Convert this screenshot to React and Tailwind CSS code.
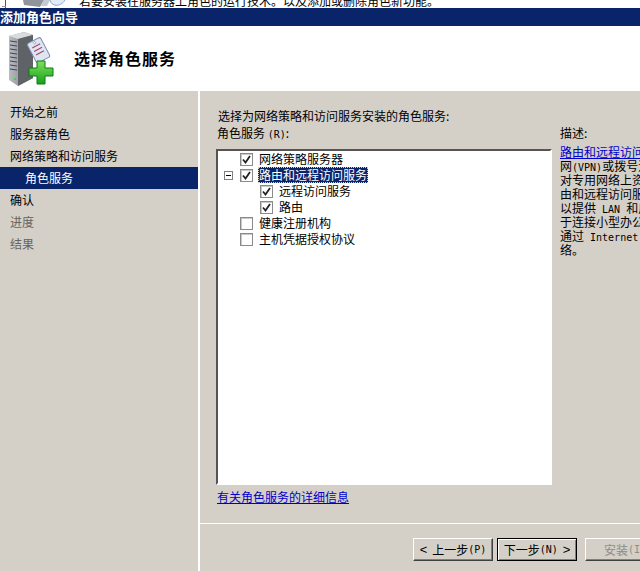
const FONT = "font-['Noto_Sans_CJK_SC','Liberation_Sans',sans-serif]";

function Latin({ children }) {
  return <span className="font-['DejaVu_Sans_Mono',monospace] text-[10px] leading-none whitespace-pre">{children}</span>;
}

function CroppedIcon() {
  return (
    <svg width="79" height="8" viewBox="0 0 79 8" className="shrink-0">
      <rect x="5" y="0" width="1" height="8" fill="#555" />
      <rect x="2" y="6" width="4" height="1" fill="#999" />
      <path d="M23 0 H44 L40 7 L24 5 Z" fill="#8f959b" />
      <path d="M44 0 H50 L47 6 H41 Z" fill="#c4cad0" />
      <path d="M50 0 C51 6 60 8 65 0" fill="#e3ebf4" stroke="#8fa6c2" strokeWidth="1" />
    </svg>
  );
}

function WizardIcon() {
  return (
    <svg width="50" height="54" viewBox="0 0 50 54" className="shrink-0">
      <defs>
        <linearGradient id="srv" x1="0" x2="1" y1="0" y2="0">
          <stop offset="0" stopColor="#b9bcc2" />
          <stop offset="1" stopColor="#6f7379" />
        </linearGradient>
        <linearGradient id="plus" x1="0" x2="0" y1="0" y2="1">
          <stop offset="0" stopColor="#7fe05a" />
          <stop offset="1" stopColor="#18a01c" />
        </linearGradient>
      </defs>
      <path d="M0 4 L15 0 L24 3 L24 46 L9 54 L0 48 Z" fill="url(#srv)" />
      <path d="M0 4 L15 0 L24 3 L9 7 Z" fill="#d9dbde" />
      <path d="M9 7 L24 3 L24 46 L9 54 Z" fill="#5f6368" />
      <path d="M1 9 L8 10 M1 13 L8 14 M1 17 L8 18 M1 21 L8 22 M1 25 L8 26 M1 29 L8 30 M1 33 L8 34 M1 37 L8 38" stroke="#45484d" strokeWidth="1.2" />
      <rect x="5" y="46" width="2" height="2" fill="#46d040" />
      <g transform="rotate(-28 30 18)">
        <rect x="22" y="7" width="15" height="22" rx="2" fill="#dfe6f2" stroke="#7d8fb0" />
        <path d="M25 13 H34 M25 17 H34 M25 21 H34" stroke="#a04a70" strokeWidth="1.2" />
        <circle cx="29.5" cy="9.5" r="1.2" fill="#fff" stroke="#7d8fb0" strokeWidth="0.6" />
      </g>
      <path d="M28 29 H36 V36 H44 V44 H36 V52 H28 V44 H20 V36 H28 Z" fill="url(#plus)" stroke="#0e7a14" strokeWidth="1" />
    </svg>
  );
}

function Check({ checked }) {
  return (
    <span className="flex h-[13px] w-[13px] shrink-0 items-center justify-center border border-[#8a8a8a] bg-white shadow-[inset_1px_1px_0_#c9c9c9]">
      {checked && (
        <svg width="9" height="9" viewBox="0 0 9 9">
          <path d="M1 4.5 L3.5 7.5 L8 1" fill="none" stroke="#222" strokeWidth="1.8" />
        </svg>
      )}
    </span>
  );
}

function TreeRow({ label, checked, nested, expander, selected }) {
  return (
    <div className={`flex h-4 items-center ${nested ? "pl-[42px]" : "pl-[22px]"}`}>
      {expander && (
        <span className="-ml-[16px] mr-[7px] flex h-[9px] w-[9px] items-center justify-center border border-[#808080] bg-white">
          <span className="h-px w-[5px] bg-black" />
        </span>
      )}
      <Check checked={checked} />
      <span
        className={
          selected
            ? "ml-[5px] flex h-4 items-center whitespace-nowrap bg-[#0a246a] px-px text-white outline-1 -outline-offset-1 outline-dotted outline-[#d4d0c8]"
            : "ml-[6px] whitespace-nowrap"
        }
      >
        {label}
      </span>
    </div>
  );
}

function WizardButton({ children, primary, disabled }) {
  return (
    <div
      className={`flex h-[23px] w-[80px] shrink-0 items-center justify-center whitespace-nowrap border bg-[#d4d0c8] ${
        primary
          ? "border-black shadow-[inset_1px_1px_0_#fff,inset_-1px_-1px_0_#808080]"
          : "border-t-white border-l-white border-r-[#404040] border-b-[#404040] shadow-[inset_-1px_-1px_0_#808080]"
      } ${disabled ? "text-[#8f8c86]" : "text-black"}`}
    >
      {children}
    </div>
  );
}

export default function App() {
  const steps = [
    { t: "开始之前" },
    { t: "服务器角色" },
    { t: "网络策略和访问服务" },
    { t: "角色服务", active: true },
    { t: "确认" },
    { t: "进度", dim: true },
    { t: "结果", dim: true },
  ];
  return (
    <div className={`${FONT} flex h-[571px] w-[640px] flex-col overflow-hidden bg-[#d4d0c8] text-[12px] leading-[14px] text-black`}>
      <div className="flex h-2 items-end overflow-hidden bg-white">
        <CroppedIcon />
        <span className="whitespace-nowrap leading-[14px]">若要安装在服务器上角色的运行技术。以及添加或删除角色新功能。</span>
      </div>
      <div className="flex h-[18px] items-center bg-[#0a246a] text-[13px] font-bold whitespace-nowrap text-white">
        添加角色向导
      </div>
      <div className="flex h-[65px] items-center bg-white pl-[9px]">
        <WizardIcon />
        <span className="mb-[2px] ml-[15px] text-[16px] font-bold tracking-[1px] whitespace-nowrap">选择角色服务</span>
      </div>
      <div className="flex min-h-0 flex-1">
        <div className="w-[198px] shrink-0 pt-[10px]">
          {steps.map((s) => (
            <div
              key={s.t}
              className={`flex h-[22px] items-center whitespace-nowrap ${
                s.active ? "my-0 bg-[#0a246a] pl-[25px] text-white" : "pl-[10px]"
              } ${s.dim ? "text-[#67645e]" : ""}`}
            >
              {s.t}
            </div>
          ))}
        </div>
        <div className="flex min-w-0 flex-1 flex-col border-l-2 border-white">
          <div className="flex min-h-0 flex-1 pt-[18px] pl-[16px]">
            <div className="flex w-[336px] shrink-0 flex-col">
              <div className="ml-[2px] whitespace-nowrap">
                选择为网络策略和访问服务安装的角色服务:
              </div>
              <div className="mt-[3px] mb-[9px] ml-px whitespace-nowrap">
                角色服务 <Latin>(R)</Latin>:
              </div>
              <div className="h-[336px] border-2 border-t-[#555] border-r-white border-b-white border-l-[#555] bg-white">
                <TreeRow label="网络策略服务器" checked />
                <TreeRow label="路由和远程访问服务" checked expander selected />
                <TreeRow label="远程访问服务" checked nested />
                <TreeRow label="路由" checked nested />
                <TreeRow label="健康注册机构" />
                <TreeRow label="主机凭据授权协议" />
              </div>
              <div className="mt-[5px] ml-px">
                <span className="whitespace-nowrap text-[#0000cc] underline">有关角色服务的详细信息</span>
              </div>
            </div>
            <div className="ml-[8px] min-w-0 flex-1 overflow-hidden pt-[17px] leading-[14px] whitespace-nowrap">
              <div>描述:</div>
              <div className="mt-[5px]">
                <div className="text-[#0000cc] underline">路由和远程访问服务</div>
                <div className="h-[14px]">网<Latin>(VPN)</Latin>或拨号连接</div>
                <div className="h-[14px]">对专用网络上资源的</div>
                <div className="h-[14px]">由和远程访问服务</div>
                <div className="h-[14px]">以提供<Latin> LAN </Latin>和广域网</div>
                <div className="h-[14px]">于连接小型办公室</div>
                <div className="h-[14px]">通过<Latin> Internet </Latin>连接</div>
                <div className="h-[14px]">络。</div>
              </div>
            </div>
          </div>
          <div className="flex h-[48px] shrink-0 items-start border-t border-white pt-[14px] pl-[213px]">
            <WizardButton><span className="mr-[5px] font-['Liberation_Sans'] text-[13px]">&lt;</span>上一步<Latin>(P)</Latin></WizardButton>
            <div className="w-1 shrink-0" />
            <WizardButton primary>下一步<Latin>(N)</Latin><span className="ml-[5px] font-['Liberation_Sans'] text-[13px]">&gt;</span></WizardButton>
            <div className="w-2 shrink-0" />
            <WizardButton disabled>安装<Latin>(I)</Latin></WizardButton>
          </div>
        </div>
      </div>
    </div>
  );
}
